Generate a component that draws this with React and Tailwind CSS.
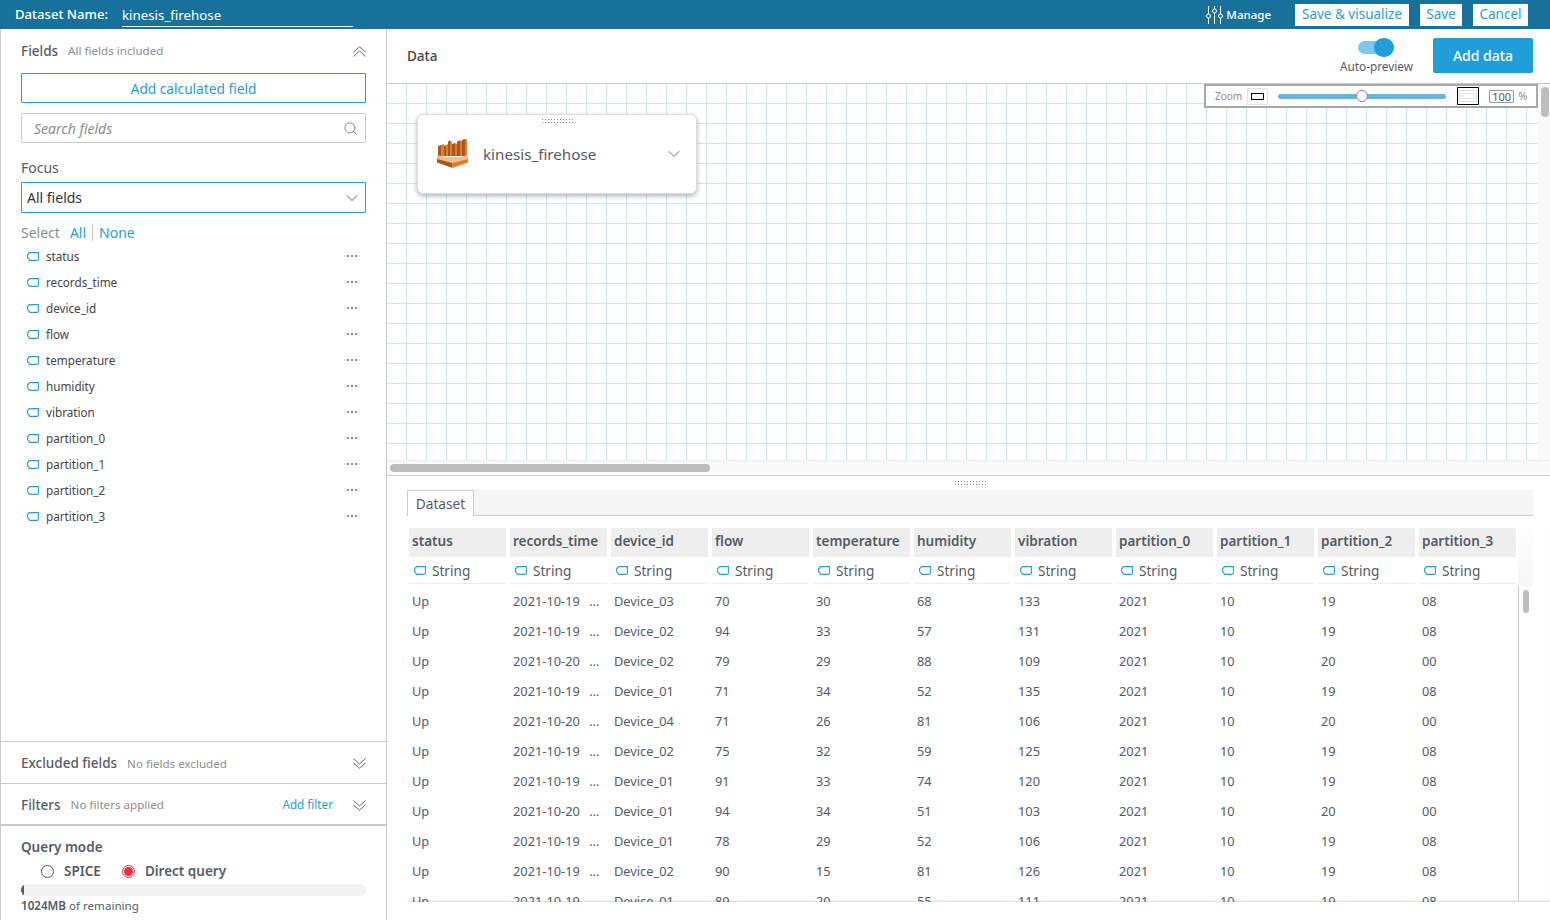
import { ChevronDown, Search } from 'lucide-react';

const font = { fontFamily: '"Noto Sans", sans-serif' };

const fieldNames = [
  'status', 'records_time', 'device_id', 'flow', 'temperature', 'humidity',
  'vibration', 'partition_0', 'partition_1', 'partition_2', 'partition_3',
];

const rows = [
  ['Up', '2021-10-19 …', 'Device_03', '70', '30', '68', '133', '2021', '10', '19', '08'],
  ['Up', '2021-10-19 …', 'Device_02', '94', '33', '57', '131', '2021', '10', '19', '08'],
  ['Up', '2021-10-20 …', 'Device_02', '79', '29', '88', '109', '2021', '10', '20', '00'],
  ['Up', '2021-10-19 …', 'Device_01', '71', '34', '52', '135', '2021', '10', '19', '08'],
  ['Up', '2021-10-20 …', 'Device_04', '71', '26', '81', '106', '2021', '10', '20', '00'],
  ['Up', '2021-10-19 …', 'Device_02', '75', '32', '59', '125', '2021', '10', '19', '08'],
  ['Up', '2021-10-19 …', 'Device_01', '91', '33', '74', '120', '2021', '10', '19', '08'],
  ['Up', '2021-10-20 …', 'Device_01', '94', '34', '51', '103', '2021', '10', '20', '00'],
  ['Up', '2021-10-19 …', 'Device_01', '78', '29', '52', '106', '2021', '10', '19', '08'],
  ['Up', '2021-10-19 …', 'Device_02', '90', '15', '81', '126', '2021', '10', '19', '08'],
  ['Up', '2021-10-19 …', 'Device_01', '89', '20', '55', '111', '2021', '10', '19', '08'],
];

function TagIcon({ className = '' }) {
  return (
    <svg viewBox="0 0 12 9" className={`h-[9px] w-[12px] shrink-0 ${className}`} fill="none" stroke="#1f9ed9" strokeWidth="1.1">
      <path d="M2.5 .6 H11.4 V7 Q11.4 8.4 10 8.4 H2.8 L.6 5.5 V2.8 Z" />
    </svg>
  );
}

function Manage() {
  return (
    <svg viewBox="0 0 17 18" className="h-[18px] w-[17px]" fill="none" stroke="#fff" strokeWidth="1">
      <path d="M2.5 0 V8 M2.5 12 V18 M8.5 0 V3 M8.5 7 V18 M14.5 0 V8 M14.5 12 V18" />
      <circle cx="2.5" cy="10" r="2" />
      <circle cx="8.5" cy="5" r="2" />
      <circle cx="14.5" cy="10" r="2" />
    </svg>
  );
}

function DoubleChevron({ up, className = '' }) {
  return (
    <svg viewBox="0 0 13 11" className={`h-[11px] w-[13px] shrink-0 ${className}`} fill="none" stroke="#666" strokeWidth="1">
      <path d={up ? 'M.5 6 L6.5 .8 L12.5 6 M.5 10.5 L6.5 5 L12.5 10.5' : 'M.5 5 L6.5 10.2 L12.5 5 M.5 .5 L6.5 6 L12.5 .5'} />
    </svg>
  );
}

function FirehoseLogo() {
  return (
    <svg viewBox="0 0 31 29" className="h-[29px] w-[31px] shrink-0">
      <path d="M1 7 L4 6 V17 H1 Z" fill="#a9551c" />
      <path d="M4 6 L7 5 V17 H4 Z" fill="#e17c2a" />
      <path d="M7 7 L9 6 V17 H7 Z" fill="#a9551c" />
      <path d="M9 6 L11 5 V17 H9 Z" fill="#e17c2a" />
      <path d="M11 3 L13 1 V17 H11 Z" fill="#a9551c" />
      <path d="M13 1 L15 3 V17 H13 Z" fill="#e17c2a" />
      <path d="M15 5 L18 4 V17 H15 Z" fill="#a9551c" />
      <path d="M18 4 L20 5 V17 H18 Z" fill="#e17c2a" />
      <path d="M20 3 L23 1 V17 H20 Z" fill="#a9551c" />
      <path d="M23 1 L25 2 V17 H23 Z" fill="#e17c2a" />
      <path d="M25 1 L28 0 V17 H25 Z" fill="#a9551c" />
      <path d="M28 0 L30 .5 V17 H28 Z" fill="#e17c2a" />
      <path d="M0 16 L8 18 H23 L31 16 V21 L15.5 25 L0 21 Z" fill="#f6bd8e" />
      <path d="M0 20 L15.5 24 V29 L0 23.5 Z" fill="#a9551c" />
      <path d="M31 20 L15.5 24 V29 L31 23.5 Z" fill="#e17c2a" />
    </svg>
  );
}

function Handle({ className = '' }) {
  return (
    <div className={`grid grid-cols-[repeat(11,1px)] gap-x-[2px] gap-y-[2px] ${className}`}>
      {Array.from({ length: 22 }).map((_, i) => (
        <span key={i} className="h-px w-px bg-[#888]" />
      ))}
    </div>
  );
}

function TopBar() {
  return (
    <header className="flex h-[29px] items-center bg-[#18719a] pl-[15px] pr-[22px] text-white">
      <span className="text-[13.1px] font-medium">Dataset Name:</span>
      <span className="ml-[14px] h-[24px] w-[231px] border-b border-white text-[13.3px] leading-[24px]">kinesis_firehose</span>
      <div className="ml-auto flex items-center">
        <Manage />
        <span className="ml-[3px] text-[11.5px] font-medium">Manage</span>
        <button className="ml-[24px] h-[22px] w-[114px] bg-white text-[13.5px] leading-none text-[#1f9ed9]">Save &amp; visualize</button>
        <button className="ml-[11px] h-[22px] w-[42px] bg-white text-[13.5px] leading-none text-[#1f9ed9]">Save</button>
        <button className="ml-[11px] h-[22px] w-[55px] bg-white text-[13.5px] leading-none text-[#1f9ed9]">Cancel</button>
      </div>
    </header>
  );
}

function Sidebar() {
  return (
    <aside className="flex h-[891px] w-[387px] shrink-0 flex-col border-x border-[#c9c9c9] text-[#545b64]">
      <div className="flex-1 px-[20px]">
        <div className="flex h-[44px] items-center">
          <span className="text-[13.5px] font-medium">Fields</span>
          <span className="ml-[10px] text-[11.6px] text-[#8d8d8d]">All fields included</span>
          <DoubleChevron up className="ml-auto" />
        </div>
        <button className="block h-[30px] w-full rounded-[1px] border border-[#1f9ed9] pt-[2px] text-[13.7px] leading-none text-[#1f9ed9]">Add calculated field</button>
        <div className="mt-[10px] flex h-[30px] items-center rounded-[1px] border border-[#c9c9c9] pl-[12px] pr-[7px]">
          <span className="text-[14px] italic text-[#8d8d8d]">Search fields</span>
          <Search className="ml-auto h-[15px] w-[15px] text-[#666]" strokeWidth={1.2} />
        </div>
        <div className="mt-[15px] text-[14px] leading-[20px]">Focus</div>
        <div className="mt-[4px] flex h-[31px] items-center rounded-[1px] border border-[#1f9ed9] pl-[5px] pr-[3px] text-[14px] text-[#333]">
          All fields
          <ChevronDown className="ml-auto h-[20px] w-[20px] text-[#444]" strokeWidth={1} />
        </div>
        <div className="mt-[9px] flex h-[20px] items-center text-[14px]">
          <span className="text-[#8d8d8d]">Select</span>
          <span className="ml-[10px] text-[#1f9ed9]">All</span>
          <span className="mx-[6px] h-[17px] w-px bg-[#c9c9c9]" />
          <span className="text-[#1f9ed9]">None</span>
        </div>
        <ul className="mt-[2px]">
          {fieldNames.map((name) => (
            <li key={name} className="flex h-[26px] items-center pl-[6px] pr-[9px] text-[11.7px] text-[#444]">
              <TagIcon className="-translate-y-px" />
              <span className="ml-[7px]">{name}</span>
              <span className="ml-auto flex -translate-y-px gap-[2px]">
                <span className="h-[2px] w-[2px] rounded-full bg-[#666]" />
                <span className="h-[2px] w-[2px] rounded-full bg-[#666]" />
                <span className="h-[2px] w-[2px] rounded-full bg-[#666]" />
              </span>
            </li>
          ))}
        </ul>
      </div>
      <div className="flex h-[42px] items-center border-t border-[#c9c9c9] px-[20px] pt-[2px]">
        <span className="text-[13.5px] font-medium">Excluded fields</span>
        <span className="ml-[10px] text-[11.6px] text-[#8d8d8d]">No fields excluded</span>
        <DoubleChevron className="ml-auto" />
      </div>
      <div className="flex h-[43px] items-center border-t border-b-2 border-[#c9c9c9] px-[20px] pt-[2px]">
        <span className="text-[13.5px] font-medium">Filters</span>
        <span className="ml-[10px] text-[11.6px] text-[#8d8d8d]">No filters applied</span>
        <span className="ml-auto text-[11.7px] text-[#1f9ed9]">Add filter</span>
        <DoubleChevron className="ml-[20px]" />
      </div>
      <div className="h-[94px] px-[20px] pt-[11px]">
        <div className="text-[13.5px] font-semibold leading-[20px]">Query mode</div>
        <div className="mt-[4px] flex h-[20px] items-center text-[13.5px] font-semibold">
          <span className="ml-[20px] h-[13px] w-[13px] rounded-full border border-[#555] bg-white" />
          <span className="ml-[10px]">SPICE</span>
          <span className="ml-[21px] flex h-[13px] w-[13px] items-center justify-center rounded-full border border-[#e6323e]">
            <span className="h-[9px] w-[9px] rounded-full bg-[#e6323e]" />
          </span>
          <span className="ml-[10px]">Direct query</span>
        </div>
        <div className="mt-[3px] h-[12px] overflow-hidden rounded-full bg-[#f2f2f2]">
          <div className="h-full w-[3px] bg-[#545b64]" />
        </div>
        <div className="mt-[1px] text-[11.6px] leading-[17px]"><span className="font-semibold">1024MB</span> of remaining</div>
      </div>
    </aside>
  );
}

function Canvas() {
  return (
    <div className="relative h-[392px] border-t border-[#c9c9c9]">
      <div className="h-[377px] w-[1153px] bg-[linear-gradient(#c9e6f3_1px,transparent_1px),linear-gradient(90deg,#c9e6f3_1px,transparent_1px)] bg-[size:20px_20px] bg-[position:19px_19px]" />
      <div className="absolute left-[30px] top-[30px] flex h-[80px] w-[280px] flex-col rounded-[6px] border border-[#dcdcdc] bg-white px-[19px] shadow-[0_2px_5px_rgba(0,0,0,0.3)]">
        <Handle className="mt-[4px] self-center" />
        <div className="mt-[16px] flex items-center">
          <FirehoseLogo />
          <span className="ml-[15px] translate-y-px text-[15.2px] text-[#545b64]">kinesis_firehose</span>
          <ChevronDown className="ml-auto -mr-[7px] h-[20px] w-[20px] text-[#555]" strokeWidth={1} />
        </div>
      </div>
      <div className="absolute right-[12px] top-0 flex h-[24px] w-[334px] items-center border-[2px] border-[#a8a8a8] bg-white pl-[9px] text-[10px] text-[#8d8d8d]">
        Zoom
        <span className="ml-[5px] flex h-[17px] w-[21px] items-center justify-center border border-[#e2e2e2]">
          <span className="h-[7px] w-[13px] border border-black" />
        </span>
        <div className="relative ml-[10px] h-[5px] w-[168px] rounded-full bg-[#63b6de]">
          <span className="absolute left-[78px] top-[-3.5px] h-[12px] w-[12px] rounded-full border border-[#888] bg-white" />
        </div>
        <span className="ml-[11px] flex h-[18px] w-[22px] items-center justify-center border border-black">
          <span className="flex h-[12px] w-[18px] items-center justify-center border border-[#ddd]">
            <span className="h-[6px] w-[12px] border border-[#e5e5e5]" />
          </span>
        </span>
        <span className="ml-[10px] h-[13px] w-[25px] rounded-[1px] border border-[#999] text-center text-[11px] leading-[12px] text-[#555]">100</span>
        <span className="ml-[4px] text-[11px]">%</span>
      </div>
      <div className="absolute right-0 top-0 h-full w-[12px] bg-[#f9f9f9]">
        <div className="ml-[3px] mt-[3px] h-[30px] w-[8px] rounded-full bg-[#bdbdbd]" />
      </div>
      <div className="absolute bottom-0 left-0 h-[15px] w-full border-t border-[#ececec] bg-[#f9f9f9]">
        <div className="ml-[3px] mt-[3px] h-[8px] w-[320px] rounded-full bg-[#bdbdbd]" />
      </div>
    </div>
  );
}

function DataTable() {
  return (
    <div className="relative flex-1 overflow-hidden border-t border-[#c9c9c9] pl-[20px]">
      <Handle className="absolute left-[568px] top-[5px]" />
      <div className="mt-[14px] flex h-[26px] w-[1126px] bg-[#f5f5f5] shadow-[inset_0_-1px_0_#c9c9c9]">
        <div className="flex h-[26px] w-[67px] items-center justify-center border border-b-0 border-[#c9c9c9] bg-white pt-[2px] text-[13.7px] text-[#545b64]">Dataset</div>
      </div>
      <div className="ml-[2px] mt-[12px] h-[374px] overflow-hidden text-[12.8px] text-[#545b64] shadow-[inset_0_-2px_2px_-1px_rgba(0,0,0,0.15)]">
        <div className="grid grid-cols-[repeat(11,97px)] gap-x-[4px]">
          {fieldNames.map((name) => (
            <div key={name} className="flex h-[29px] items-center whitespace-nowrap bg-[#eeeeee] pb-[3px] pl-[3px] text-[13.5px] font-semibold">{name}</div>
          ))}
          {fieldNames.map((name) => (
            <div key={name} className="flex h-[27px] items-center border-b border-[#eee] pl-[5px] pt-[2px] text-[13.6px]">
              <TagIcon className="-translate-y-px" />
              <span className="ml-[6px]">String</span>
            </div>
          ))}
        </div>
        <div className="mt-[3px]">
          {rows.map((row, i) => (
            <div key={i} className="grid h-[30px] grid-cols-[repeat(11,97px)] items-center gap-x-[4px]">
              {row.map((cell, j) => (
                <div key={j} className="whitespace-nowrap pl-[3px] [word-spacing:6px]">{cell}</div>
              ))}
            </div>
          ))}
        </div>
      </div>
      <div className="absolute left-[1131px] top-[42px] h-[68px] w-[15px] bg-gradient-to-b from-white to-[#f6f6f6]" />
      <div className="absolute left-[1131px] top-[110px] h-[316px] w-px bg-[#ccc]" />
      <div className="absolute left-[1136px] top-[114px] h-[23px] w-[6px] rounded-full bg-[#bdbdbd]" />
    </div>
  );
}

export default function App() {
  return (
    <div style={font} className="h-[920px] w-[1550px] overflow-hidden bg-white">
      <TopBar />
      <div className="flex">
        <Sidebar />
        <main className="flex h-[891px] min-w-0 flex-1 flex-col">
          <div className="flex h-[54px] items-start pl-[20px] pr-[17px]">
            <span className="mt-[17px] text-[13.5px] font-medium leading-[20px] text-[#444]">Data</span>
            <div className="ml-auto flex flex-col items-center">
              <span className="relative mt-[12px] h-[13px] w-[36px] rounded-full bg-[#7ac8ee]">
                <span className="absolute right-0 top-[-3px] h-[19px] w-[20px] rounded-full bg-[#1f9ed9]" />
              </span>
              <span className="mt-[4px] text-[11.8px] leading-[16px] text-[#545b64]">Auto-preview</span>
            </div>
            <button className="ml-[20px] mt-[9px] h-[35px] w-[100px] rounded-[2px] bg-[#1f9ed9] text-[14px] font-medium leading-none text-white">Add data</button>
          </div>
          <Canvas />
          <DataTable />
        </main>
      </div>
    </div>
  );
}
